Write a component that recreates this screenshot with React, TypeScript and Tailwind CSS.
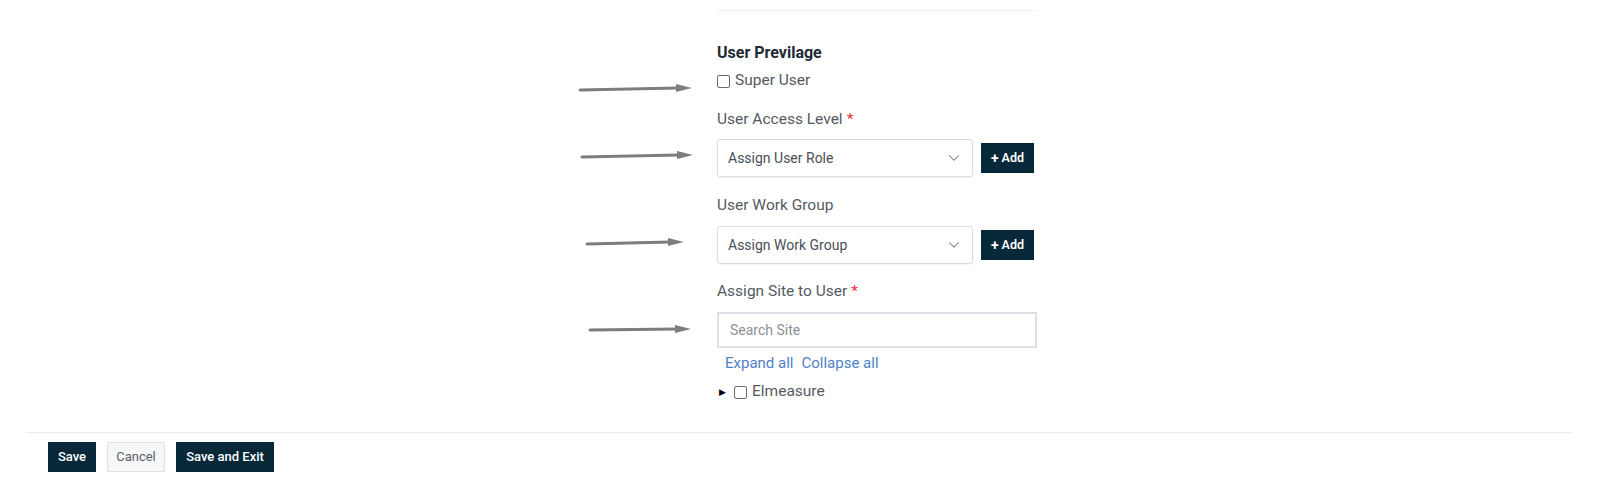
import { ChevronDown } from "lucide-react";

const NAVY = "bg-[#062839]";

function Arrow({ x1, y1, x2, y2 }: { x1: number; y1: number; x2: number; y2: number }) {
  // shaft stops short of the tip so the head stays sharp
  const hx = x2 - 16;
  return (
    <g>
      <line x1={x1} y1={y1} x2={hx + 2} y2={y2} stroke="#7d7d7d" strokeWidth={3} strokeLinecap="round" />
      <polygon points={`${hx},${y2 - 4} ${x2},${y2} ${hx},${y2 + 4}`} fill="#7d7d7d" />
    </g>
  );
}

function Label({ text, required }: { text: string; required?: boolean }) {
  return (
    <p className="h-5 text-[15.5px] leading-5 text-[#555a60]">
      {text}
      {required ? <span className="ml-1 text-[#e8333a]">*</span> : null}
    </p>
  );
}

function SelectRow({ placeholder }: { placeholder: string }) {
  return (
    <div className="flex items-center gap-2">
      <div className="flex h-[38px] w-[256px] items-center justify-between rounded-[3px] border border-[#dcdcdc] bg-white pl-[10px] pr-[9px] shadow-[0_1px_1px_rgba(0,0,0,0.04)]">
        <span className="text-[14px] text-[#4a4f55]">{placeholder}</span>
        <ChevronDown className="h-[18px] w-[18px] text-[#6f747b]" strokeWidth={1.4} />
      </div>
      <button className={`flex h-[30px] w-[53px] items-center justify-center gap-[3px] ${NAVY} text-[12.5px] font-semibold text-white`}>
        <span className="text-[14px] font-bold leading-none">+</span>
        Add
      </button>
    </div>
  );
}

export default function App() {
  return (
    <div className="relative h-[480px] w-full bg-white font-['Roboto','Liberation_Sans',sans-serif]">
      <svg className="pointer-events-none absolute left-0 top-0" width={720} height={360}>
        <Arrow x1={580} y1={90} x2={692} y2={88} />
        <Arrow x1={582} y1={157} x2={693} y2={155} />
        <Arrow x1={587} y1={244} x2={684} y2={242} />
        <Arrow x1={590} y1={330} x2={691} y2={329} />
      </svg>

      <div className="flex pt-[10px]">
        <div className="w-[717px] shrink-0" />
        <div className="w-[320px]">
          <div className="h-px bg-[#f1f1f1]" />

          <h3 className="mt-[32px] h-5 text-[16px] font-bold leading-5 text-[#1d2a36]">User Previlage</h3>

          <label className="mt-[8px] flex h-5 items-center gap-[5px]">
            <span className="h-[13px] w-[13px] rounded-[2px] border border-[#6d6d6d] bg-white" />
            <span className="text-[15.5px] text-[#555a60]">Super User</span>
          </label>

          <div className="mt-[18px]">
            <Label text="User Access Level" required />
          </div>
          <div className="mt-[10px]">
            <SelectRow placeholder="Assign User Role" />
          </div>

          <div className="mt-[18px]">
            <Label text="User Work Group" />
          </div>
          <div className="mt-[11px]">
            <SelectRow placeholder="Assign Work Group" />
          </div>

          <div className="mt-[17px]">
            <Label text="Assign Site to User" required />
          </div>
          <div className="mt-[11px] flex h-[36px] items-center border-2 border-[#dfe0e6] bg-white pl-[11px]">
            <span className="text-[14px] text-[#8c9198]">Search Site</span>
          </div>

          <div className="mt-[5px] flex h-5 items-center gap-[8px] pl-[8px] text-[15px] text-[#4f82c6]">
            <span>Expand all</span>
            <span>Collapse all</span>
          </div>

          <div className="mt-[9px] flex h-5 items-center pl-[2px]">
            <span className="text-[9px] leading-none text-black">▶</span>
            <span className="ml-[8px] h-[13px] w-[13px] rounded-[2px] border border-[#6d6d6d] bg-white" />
            <span className="ml-[5px] text-[15.5px] text-[#555a60]">Elmeasure</span>
          </div>
        </div>
      </div>

      <div className="mx-[26px] mt-[30px] h-px bg-[#ececec]" />
      <div className="flex gap-[11px] pl-[48px] pt-[9px]">
        <button className={`h-[30px] w-[48px] ${NAVY} text-[13px] font-medium text-white`}>Save</button>
        <button className="h-[30px] w-[58px] border border-[#dfe1e6] bg-[#f6f7f9] text-[13px] text-[#5a5f66]">Cancel</button>
        <button className={`h-[30px] w-[98px] ${NAVY} text-[13px] font-medium text-white`}>Save and Exit</button>
      </div>
    </div>
  );
}
